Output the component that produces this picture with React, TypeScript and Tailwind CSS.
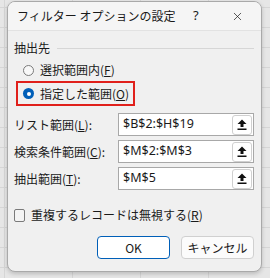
import { X } from "lucide-react";

const font = { fontFamily: '"Noto Sans CJK JP", "Noto Sans", sans-serif' };

const RefButton = () => (
  <button className="w-[20px] h-[20px] flex items-center justify-center rounded-[3px] border border-[#d0d0d0] bg-white">
    <svg width="10" height="11" viewBox="0 0 10 11">
      <path d="M5 0.5 L9.5 5 L6.5 5 L6.5 8 L3.5 8 L3.5 5 L0.5 5 Z" fill="#111" />
      <rect x="0.5" y="9.5" width="9" height="1.5" fill="#111" />
    </svg>
  </button>
);

const RangeRow = ({ label, mnemonic, value }: { label: string; mnemonic: string; value: string }) => (
  <div className="flex items-center h-[23px]">
    <span className="w-[104px] text-[12px] text-[#1a1a1a]">
      {label}(<span className="underline">{mnemonic}</span>):
    </span>
    <div className="flex-1 h-[23px] flex items-center justify-between bg-white border border-[#a8a8a8] pl-[4px] pr-[1px]">
      <span className="text-[12.5px] text-[#1a1a1a]" style={{ fontFamily: '"Noto Sans", "Noto Sans CJK JP", sans-serif' }}>
        {value}
      </span>
      <RefButton />
    </div>
  </div>
);

export default function App() {
  return (
    <div
      className="w-[270px] h-[278px] overflow-hidden pl-[7px] pt-[1px] bg-[#e6e6e6] bg-[linear-gradient(to_bottom,#d6d6d6_1px,transparent_1px),linear-gradient(to_right,#d6d6d6_1px,transparent_1px)] bg-[size:100%_20px,68px_100%] bg-[position:0_7px,4px_0]"
      style={font}
    >
      <div className="w-[255px] h-[271px] rounded-[8px] border border-[#a9a9a9] bg-[#f0f0f0] overflow-hidden flex flex-col shadow-[0_2px_4px_rgba(0,0,0,0.18)]">
        {/* title bar */}
        <div className="h-[29px] shrink-0 bg-[#f5f5f5] flex items-center pl-[9px] border-b border-[#e2e2e2]">
          <span className="text-[12px] text-[#1a1a1a] flex-1">フィルター オプションの設定</span>
          <span className="text-[13px] text-[#1a1a1a] w-[14px] mr-[24px]" style={{ fontFamily: '"Noto Sans", sans-serif' }}>?</span>
          <X className="w-[13px] h-[13px] mr-[17px] text-[#1a1a1a]" strokeWidth={1.3} />
        </div>

        {/* body */}
        <div className="flex flex-col px-[6px] pt-[8px]">
          <div className="flex items-center h-[18px]">
            <span className="text-[12px] text-[#1a1a1a]">抽出先</span>
            <div className="flex-1 ml-[7px] mr-[1px] h-px bg-[#d6d6d6]" />
          </div>

          <div className="flex items-center h-[20px] mt-[3px] pl-[9px]">
            <span className="w-[11px] h-[11px] rounded-full border border-[#7a7a7a] bg-[#f8f8f8]" />
            <span className="ml-[6px] text-[12px] text-[#1a1a1a]">
              選択範囲内(<span className="underline">F</span>)
            </span>
          </div>

          <div className="w-[119px] h-[25px] mt-[1px] ml-[2px] border-2 border-[#e0201b] flex items-center pl-[5px]">
            <span className="w-[11px] h-[11px] rounded-full bg-[#005fb8] flex items-center justify-center">
              <span className="w-[4px] h-[4px] rounded-full bg-white" />
            </span>
            <span className="ml-[6px] text-[12px] text-[#1a1a1a]">
              指定した範囲(<span className="underline">O</span>)
            </span>
          </div>

          <div className="flex flex-col gap-[4px] mt-[7px] pr-[1px]">
            <RangeRow label="リスト範囲" mnemonic="L" value="$B$2:$H$19" />
            <RangeRow label="検索条件範囲" mnemonic="C" value="$M$2:$M$3" />
            <RangeRow label="抽出範囲" mnemonic="T" value="$M$5" />
          </div>

          <div className="flex items-center h-[18px] mt-[16px]">
            <span className="w-[11px] h-[13px] rounded-[2px] border border-[#7a7a7a] bg-[#f4f4f4]" />
            <span className="ml-[6px] text-[12px] text-[#1a1a1a]">
              重複するレコードは無視する(<span className="underline">R</span>)
            </span>
          </div>

          <div className="flex justify-end gap-[11px] mt-[12px] pr-[1px]">
            <button className="w-[73px] h-[23px] rounded-[4px] border border-[#005fb8] bg-white text-[12px] text-[#1a1a1a]">
              OK
            </button>
            <button className="w-[73px] h-[23px] rounded-[4px] border border-[#d0d0d0] bg-[#fbfbfb] text-[12px] text-[#1a1a1a]">
              キャンセル
            </button>
          </div>
        </div>
      </div>
    </div>
  );
}
